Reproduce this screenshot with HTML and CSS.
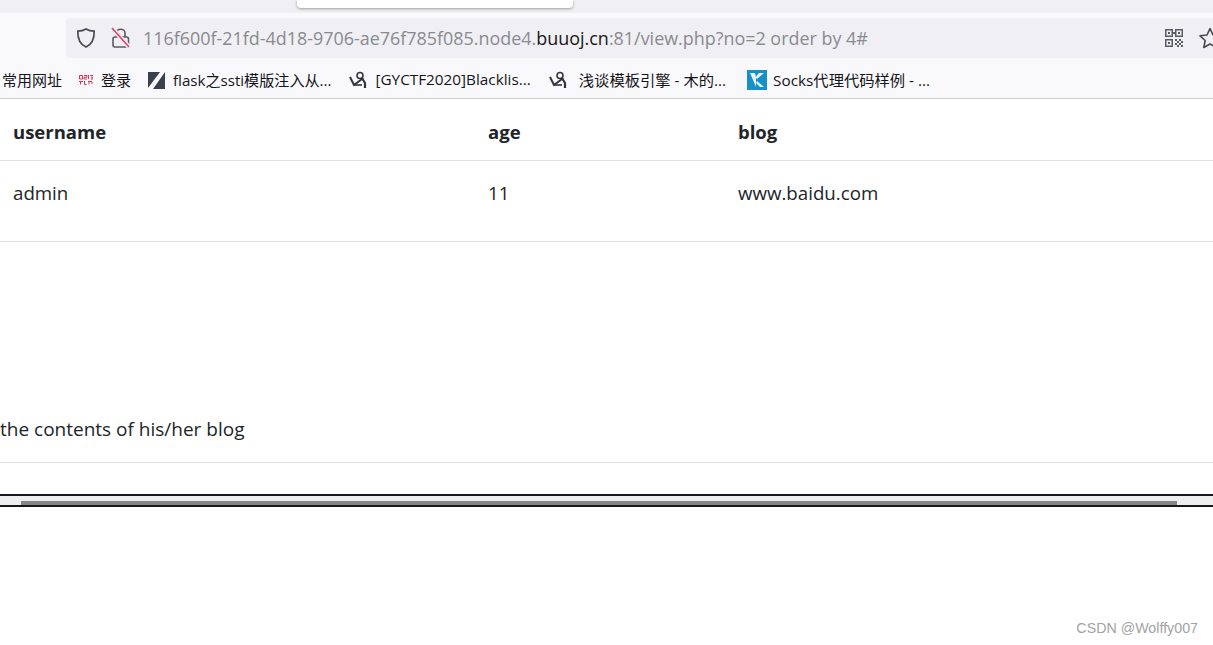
FILE: index.html
```html
<!DOCTYPE html>
<html lang="en">
<head>
  <meta charset="UTF-8">
  <title>view.php</title>
  <link rel="stylesheet" href="styles.css">
</head>
<body>
  <div class="tabstrip"><div class="tab"></div></div>

  <div class="toolbar">
    <div class="urlbar">
      <svg class="shield" width="22" height="22" viewBox="0 0 22 22" fill="none" stroke="#4a4a52" stroke-width="1.7">
        <path d="M11 2 C8.5 3.6 5.5 4.2 2.8 4.2 C2.6 11 4.6 17 11 20 C17.4 17 19.4 11 19.2 4.2 C16.5 4.2 13.5 3.6 11 2 Z"/>
      </svg>
      <svg class="lock" width="20" height="22" viewBox="0 0 20 22" fill="none">
        <path d="M5.5 10 V6 C5.5 1 14 1 14 6 V10" stroke="#5b5b66" stroke-width="1.6"/>
        <rect x="2" y="10" width="15.5" height="10" rx="2" stroke="#5b5b66" stroke-width="1.6"/>
        <path d="M1 1 L18 20" stroke="#f0f0f4" stroke-width="4.5"/>
        <path d="M1 1 L18 20" stroke="#ee3b66" stroke-width="1.6"/>
      </svg>
      <div class="url">116f600f-21fd-4d18-9706-ae76f785f085.node4.<span class="domain">buuoj.cn</span>:81/view.php?no=2 order by 4#</div>
      <svg class="qr" width="20" height="20" viewBox="0 0 20 20" fill="#5b5b66">
        <path d="M1 1h8v8H1z M2.5 2.5v5h5v-5z M11 1h8v8h-8z M12.5 2.5v5h5v-5z M1 11h8v8H1z M2.5 12.5v5h5v-5z" fill-rule="evenodd"/>
        <path d="M4 4h2v2H4z M14 4h2v2h-2z M4 14h2v2H4z M9 4h2v2H9z M11 11h2v2h-2z M15 11h2v2h-2z M13 13h2v2h-2z M17 13h2v2h-2z M11 15h2v2h-2z M15 15h2v2h-2z M13 17h2v2h-2z M17 17h2v2h-2z"/>
      </svg>
      <svg class="star" width="24" height="24" viewBox="0 0 24 24" fill="none" stroke="#4a4a52" stroke-width="1.6" stroke-linejoin="round">
        <path d="M12 2.5 L15 9 L22 9.8 L16.8 14.5 L18.2 21.5 L12 18 L5.8 21.5 L7.2 14.5 L2 9.8 L9 9 Z"/>
      </svg>
    </div>

    <div class="bookmarks">
      <span class="mark first">常用网址</span>
      <span class="mark login">
        <svg width="14" height="10" viewBox="0 0 14 10" fill="none" stroke="#dd3355" stroke-width="1"><path d="M0.5 0.5h3v3.5h-3z M5 0.5h3v1.7h-3v1.8h3 M9.5 0v4 M11 0.5h3 M12 2.2h2v1.8h-2 M0 6.5h4 M1.5 6.5v3 M5.5 6v3.5h2 M9 6.5h4 M10 6.5v3 M12 8h2"/></svg>
        登录
      </span>
      <span class="mark flask">
        <svg width="17" height="19" viewBox="0 0 17 19" fill="#3a3f4e"><path d="M0 1h12L0 17z M17 1v17H5z"/></svg>
        flask之ssti模版注入从...
      </span>
      <span class="mark gyctf">
        <svg width="19" height="18" viewBox="0 0 19 18" fill="none" stroke="#33363f"><circle cx="11" cy="4.5" r="3" stroke-width="1.6"/><path d="M1 6 L5 14 L13 8" stroke-width="2"/><path d="M13 7 L16 12 V17" stroke-width="2.2"/><path d="M5 14 H13" stroke-width="1.6"/></svg>
        [GYCTF2020]Blacklis...
      </span>
      <span class="mark template">
        <svg width="19" height="18" viewBox="0 0 19 18" fill="none" stroke="#33363f"><circle cx="11" cy="4.5" r="3" stroke-width="1.6"/><path d="M1 6 L5 14 L13 8" stroke-width="2"/><path d="M13 7 L16 12 V17" stroke-width="2.2"/><path d="M5 14 H13" stroke-width="1.6"/></svg>
        浅谈模板引擎 - 木的...
      </span>
      <span class="mark socks">
        <svg width="20" height="20" viewBox="0 0 20 20"><rect width="20" height="20" fill="#1790c8"/><path d="M3 3h5l1 5v9z M10 9 L17 3 H12 L8.5 7z M10 11 L17 17 H13 L9 13z" fill="#e8f4fa"/></svg>
        Socks代理代码样例 - ...
      </span>
    </div>
  </div>

  <table class="users">
    <tr><th class="col-name">username</th><th class="col-age">age</th><th>blog</th></tr>
    <tr><td>admin</td><td>11</td><td>www.baidu.com</td></tr>
  </table>

  <p class="contents">the contents of his/her blog</p>

  <div class="scrollbox"><div class="thumb"></div></div>

  <div class="watermark">CSDN @Wolffy007</div>
</body>
</html>
```

FILE: styles.css
```css
html, body {
  margin: 0;
  padding: 0;
}

body {
  position: relative;
  height: 645px;
  overflow: hidden;
  background: #fff;
  color: #212529;
  font-family: "Open Sans", "Noto Sans CJK SC", sans-serif;
}

.tabstrip {
  height: 13px;
  background: #f0f0f4;
}

.tab {
  position: absolute;
  left: 297px;
  top: 0;
  width: 276px;
  height: 8px;
  background: #fff;
  border-radius: 0 0 4px 4px;
  box-shadow: 0 1px 3px rgba(0,0,0,0.35);
}

.toolbar {
  height: 86px;
  padding-top: 5px;
  box-sizing: border-box;
  background: #f9f9fb;
  border-bottom: 1px solid #ccc;
}

.urlbar {
  display: flex;
  align-items: center;
  height: 40px;
  margin-left: 66px;
  padding-left: 9px;
  background: #f0f0f4;
  border-radius: 4px 0 0 4px;
  overflow: hidden;
}

.lock {
  margin-left: 14px;
  flex: none;
}

.shield {
  flex: none;
}

.url {
  margin-left: 12px;
  width: 1021px;
  flex: none;
  font-size: 17.93px;
  color: #8a8a90;
  white-space: nowrap;
}

.domain {
  color: #15141a;
}

.star {
  margin-left: 14px;
  flex: none;
}

.qr {
  flex: none;
}

.bookmarks {
  display: flex;
  align-items: center;
  height: 40px;
  padding-top: 2px;
  box-sizing: border-box;
  font-size: 15px;
  color: #15141a;
}

.mark {
  display: flex;
  align-items: center;
  white-space: nowrap;
}

.mark svg {
  margin-top: 2px;
}

.first { margin-left: 2px; }
.login { margin-left: 17px; gap: 8px; }
.flask { margin-left: 17px; gap: 8px; font-size: 15.1px; }
.gyctf { margin-left: 18px; gap: 7px; font-size: 15.3px; }
.template { margin-left: 18px; gap: 11px; font-size: 15.3px; }
.socks { margin-left: 21px; gap: 6px; font-size: 15.3px; }

.users {
  width: 100%;
  table-layout: fixed;
  border-collapse: collapse;
  font-size: 18.7px;
  text-align: left;
}

.users th, .users td {
  box-sizing: border-box;
  padding: 0 13px;
  border-bottom: 1px solid #dee2e6;
}

.users th {
  height: 61px;
  padding-top: 4px;
  font-size: 18.5px;
}

.users td {
  height: 81px;
  padding-bottom: 17px;
}

.col-name { width: 475px; }
.col-age { width: 250px; }

.contents {
  margin: 174px 0 0;
  height: 47px;
  font-size: 19px;
  border-bottom: 1px solid #dee2e6;
  box-sizing: border-box;
}

.scrollbox {
  margin-top: 31px;
  height: 13px;
  box-sizing: border-box;
  background: #eee;
  border-top: 2px solid #15181c;
  border-bottom: 2px solid #15181c;
  padding: 5px 36px 0 21px;
}

.thumb {
  height: 4px;
  background: #868686;
}

.watermark {
  position: absolute;
  right: 15px;
  top: 620px;
  font-family: "Liberation Sans", sans-serif;
  font-size: 14.25px;
  color: #a3a3a3;
}
```
